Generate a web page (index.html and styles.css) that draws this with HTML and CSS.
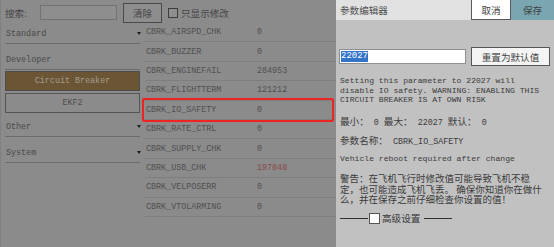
FILE: index.html
```html
<!DOCTYPE html>
<html lang="zh">
<head>
<meta charset="utf-8">
<title>参数编辑器</title>
<link rel="stylesheet" href="styles.css">
</head>
<body>
<div class="app">
  <div class="main">
    <div class="search">
      <span class="lbl c">搜索:</span>
      <span class="sinput"></span>
      <span class="clear c">清除</span>
      <span class="chk"></span>
      <span class="chk-lbl c">只显示修改</span>
    </div>
    <div class="body">
      <div class="side">
        <div class="grp m"><span>Standard</span><i class="arrow"></i></div>
        <div class="grp grp-open m"><span>Developer</span></div>
        <div class="subs">
          <div class="sub sub-active m">Circuit Breaker</div>
          <div class="sub m">EKF2</div>
        </div>
        <div class="grp grp-other m"><span>Other</span><i class="arrow"></i></div>
        <div class="grp m"><span>System</span><i class="arrow"></i></div>
      </div>
      <div class="list m">
        <div class="row"><span class="name">CBRK_AIRSPD_CHK</span><span class="val">0</span></div>
        <div class="row"><span class="name">CBRK_BUZZER</span><span class="val">0</span></div>
        <div class="row"><span class="name">CBRK_ENGINEFAIL</span><span class="val">284953</span></div>
        <div class="row"><span class="name">CBRK_FLIGHTTERM</span><span class="val">121212</span></div>
        <div class="row"><span class="name">CBRK_IO_SAFETY</span><span class="val">0</span></div>
        <div class="row"><span class="name">CBRK_RATE_CTRL</span><span class="val">0</span></div>
        <div class="row"><span class="name">CBRK_SUPPLY_CHK</span><span class="val">0</span></div>
        <div class="row"><span class="name">CBRK_USB_CHK</span><span class="val val-mod">197848</span></div>
        <div class="row"><span class="name">CBRK_VELPOSERR</span><span class="val">0</span></div>
        <div class="row"><span class="name">CBRK_VTOLARMING</span><span class="val">0</span></div>
        <div class="hl"></div>
      </div>
    </div>
  </div>
  <div class="panel">
    <div class="phead">
      <div class="ptitle c">参数编辑器</div>
      <div class="pbtn cancel c">取消</div>
      <div class="pbtn save c">保存</div>
    </div>
    <div class="pbody">
      <div class="vrow">
        <div class="vinput"><span class="sel">22027</span></div>
        <div class="reset c">重置为默认值</div>
      </div>
      <div class="desc m">Setting this parameter to 22027 will<br>disable IO safety. WARNING: ENABLING THIS<br>CIRCUIT BREAKER IS AT OWN RISK</div>
      <div class="line"><span class="c">最小：</span><span class="m"> 0 </span><span class="c">最大：</span><span class="m"> 22027 </span><span class="c">默认：</span><span class="m"> 0</span></div>
      <div class="line l-name"><span class="c">参数名称：</span><span class="m"> CBRK_IO_SAFETY</span></div>
      <div class="line l-veh m">Vehicle reboot required after change</div>
      <div class="warn c">警告：在飞机飞行时修改值可能导致飞机不稳<br>定，也可能造成飞机飞丢。 确保你知道你在做什<br>么，并在保存之前仔细检查你设置的值！</div>
      <div class="adv">
        <span class="rule"></span>
        <span class="achk"></span>
        <span class="alabel c">高级设置</span>
        <span class="rule"></span>
      </div>
    </div>
  </div>
</div>
</body>
</html>
```
FILE: styles.css
```css
html, body {
  margin: 0;
  padding: 0;
}
body {
  width: 554px;
  height: 247px;
  overflow: hidden;
  background: #8b8b8b;
}
.m {
  font-family: "Liberation Mono", "Noto Sans CJK SC", monospace;
  font-size: 8.4px;
}
.c {
  font-family: "Noto Sans CJK SC", sans-serif;
  font-size: 9.6px;
}
.app {
  display: flex;
  width: 554px;
  height: 247px;
}
.main {
  width: 336px;
  height: 247px;
  background: #8b8b8b;
  color: #4a4a4a;
  box-sizing: border-box;
  border-left: 1px solid #808080;
}
.search {
  height: 23px;
  padding-top: 2px;
  padding-left: 4px;
  box-sizing: border-box;
  display: flex;
  align-items: center;
}
.lbl {
  width: 35px;
  color: #454545;
}
.sinput {
  width: 77px;
  height: 15px;
  box-sizing: border-box;
  border: 1px solid #727272;
  background: #8e8e8e;
}
.clear {
  margin-left: 6px;
  width: 39px;
  height: 20px;
  box-sizing: border-box;
  border: 1px solid #4a4a4a;
  background: #8d8d8d;
  display: flex;
  align-items: center;
  justify-content: center;
  color: #454545;
}
.chk {
  margin-left: 6px;
  width: 10px;
  height: 10px;
  box-sizing: border-box;
  border: 1px solid #3c3c3c;
  background: #8f8f8f;
}
.chk-lbl {
  margin-left: 3px;
  color: #454545;
}
.body {
  display: flex;
}
.side {
  width: 135px;
  margin-left: 4px;
}
.grp {
  height: 20px;
  box-sizing: border-box;
  border-bottom: 1px solid #6c6c6c;
  display: flex;
  align-items: center;
  justify-content: space-between;
  padding-left: 1px;
  margin-top: 6px;
  color: #4a4a4a;
}
.grp:first-child {
  margin-top: 1px;
}
.grp-other {
  margin-top: 4px;
}
.arrow {
  width: 0;
  height: 0;
  border-left: 2.5px solid transparent;
  border-right: 2.5px solid transparent;
  border-top: 3px solid #1e1e1e;
  margin-right: -1px;
}
.subs {
  margin-top: 1px;
  display: flex;
  flex-direction: column;
  gap: 2px;
}
.sub {
  height: 20px;
  box-sizing: border-box;
  border: 1px solid #555;
  display: flex;
  align-items: center;
  justify-content: center;
  color: #4e4e4e;
}
.sub-active {
  background: #6b5534;
  color: #a39d92;
  border-color: #4d4d4d;
}
.list {
  position: relative;
  width: 190px;
  margin-left: 5px;
}
.row {
  height: 19.4px;
  box-sizing: border-box;
  border-bottom: 1px solid #7e7e7e;
  display: flex;
  align-items: center;
  color: #505050;
}
.name {
  width: 111px;
  padding-left: 1px;
}
.val-mod {
  color: #8a4848;
}
.hl {
  position: absolute;
  left: -3px;
  top: 75px;
  width: 192px;
  height: 24px;
  box-sizing: border-box;
  border: 2px solid #f02323;
  border-radius: 2px;
}
.panel {
  width: 218px;
  height: 247px;
  background: #c1c1c1;
  color: #3b3b3b;
}
.phead {
  display: flex;
  height: 20px;
}
.ptitle {
  flex: 1;
  background: #e1e1e1;
  padding-left: 4px;
  display: flex;
  align-items: center;
  color: #505050;
}
.pbtn {
  display: flex;
  align-items: center;
  justify-content: center;
  box-sizing: border-box;
}
.cancel {
  width: 40px;
  background: #ffffff;
  border: 1px solid #5a5a5a;
  border-top: none;
  color: #404040;
}
.save {
  width: 43px;
  background: #7aa6b1;
  color: #404040;
}
.pbody {
  padding: 0 4px 0 3px;
}
.vrow {
  margin-top: 27px;
  height: 19px;
  display: flex;
  align-items: center;
  gap: 5px;
}
.vinput {
  width: 127px;
  height: 15px;
  box-sizing: border-box;
  border: 1px solid #8f8f8f;
  background: #ffffff;
  display: flex;
  align-items: center;
  padding-left: 1px;
}
.sel {
  font-family: "Liberation Mono", monospace;
  font-size: 9px;
  line-height: 11px;
  background: #3373c8;
  color: #ffffff;
}
.reset {
  width: 79px;
  height: 19px;
  box-sizing: border-box;
  border: 1px solid #555;
  background: #f4f4f4;
  display: flex;
  align-items: center;
  justify-content: center;
  color: #454545;
}
.desc {
  margin-top: 10px;
  padding-left: 1px;
  font-size: 8.1px;
  line-height: 9.7px;
  white-space: nowrap;
}
.line {
  margin-top: 10px;
  padding-left: 1px;
  height: 10px;
  line-height: 10px;
  white-space: pre;
}
.l-name {
  margin-top: 9px;
}
.l-veh {
  margin-top: 10px;
  font-size: 8.1px;
}
.warn {
  margin-top: 9px;
  padding-left: 1px;
  font-size: 9.5px;
  line-height: 10.4px;
  white-space: nowrap;
}
.adv {
  margin-top: 8px;
  height: 12px;
  display: flex;
  align-items: center;
  padding-left: 1px;
}
.rule {
  width: 28px;
  height: 1px;
  background: #2f2f2f;
}
.achk {
  width: 11px;
  height: 11px;
  box-sizing: border-box;
  border: 1px solid #555;
  background: #ffffff;
  margin-left: 1px;
}
.alabel {
  margin: 0 4px 0 2px;
}
```
